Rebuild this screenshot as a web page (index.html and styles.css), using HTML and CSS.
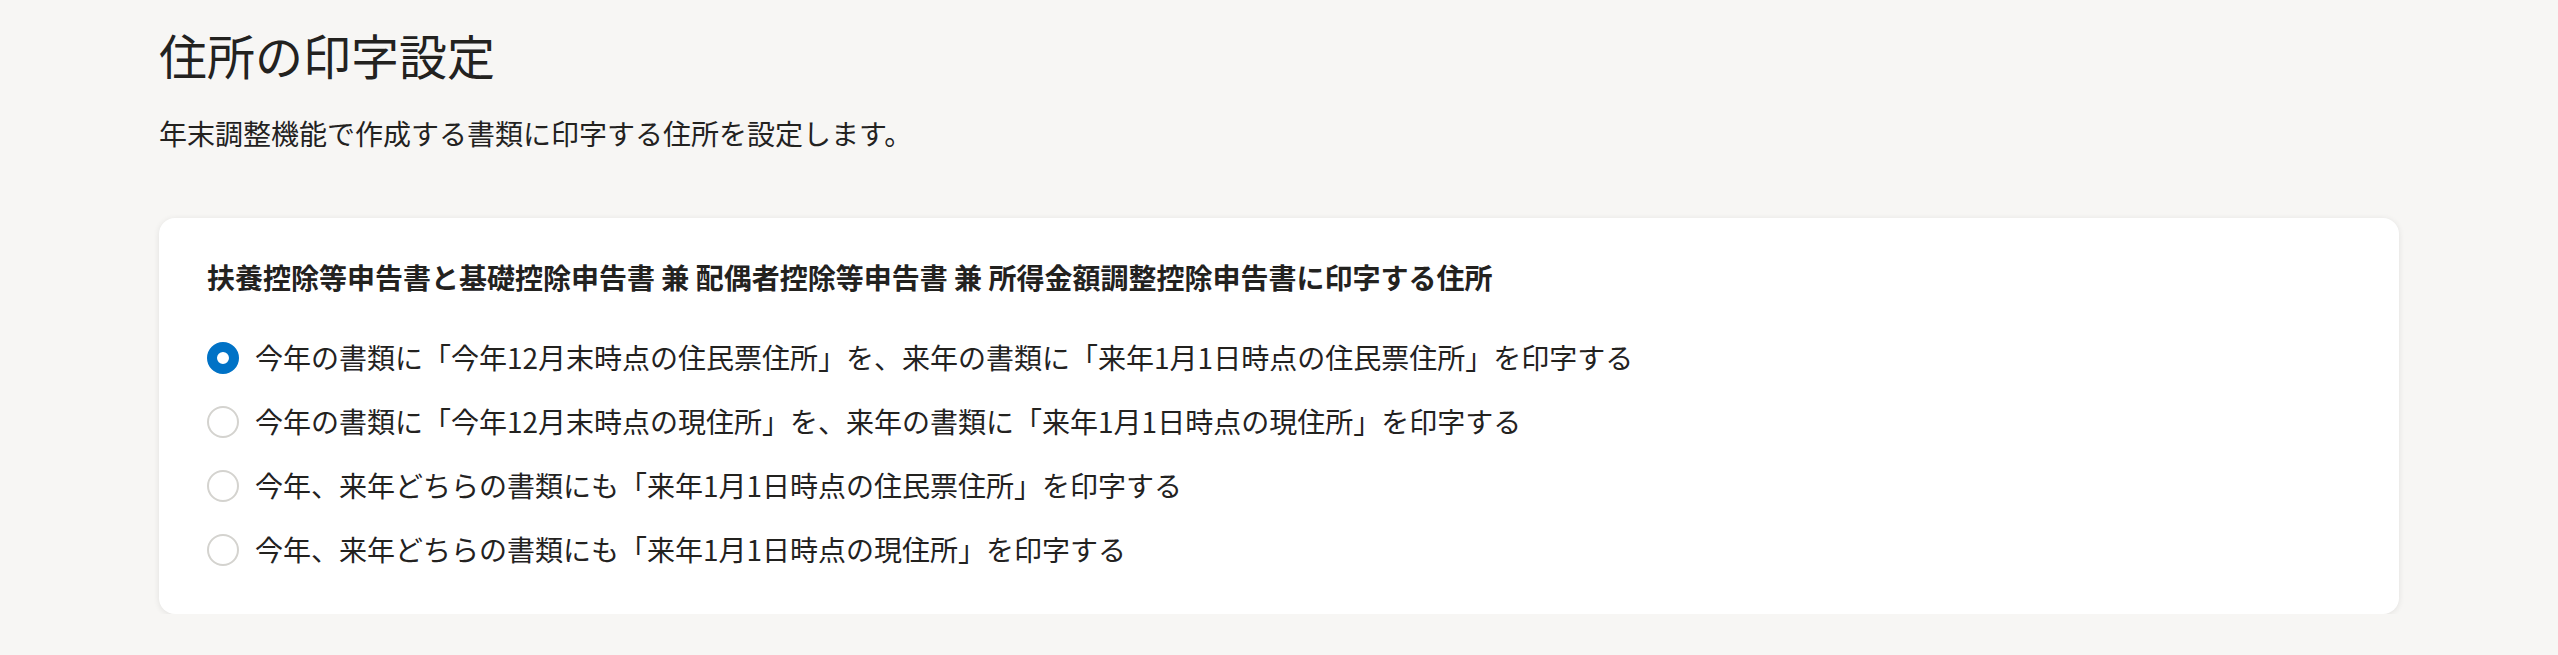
FILE: index.html
```html
<!DOCTYPE html>
<html lang="ja">
<head>
<meta charset="utf-8">
<title>住所の印字設定</title>
<link rel="stylesheet" href="styles.css">
</head>
<body>
<main class="page">
  <h1 class="page-title">住所の印字設定</h1>
  <p class="page-lead">年末調整機能で作成する書類に印字する住所を設定します。</p>
  <section class="card">
    <h2 class="card-title">扶養控除等申告書と基礎控除申告書 兼 配偶者控除等申告書 兼 所得金額調整控除申告書に印字する住所</h2>
    <div class="options">
      <label class="option">
        <input class="radio" type="radio" name="addr" checked>
        <span class="option-text">今年の書類に「今年12月末時点の住民票住所」を、来年の書類に「来年1月1日時点の住民票住所」を印字する</span>
      </label>
      <label class="option">
        <input class="radio" type="radio" name="addr">
        <span class="option-text">今年の書類に「今年12月末時点の現住所」を、来年の書類に「来年1月1日時点の現住所」を印字する</span>
      </label>
      <label class="option">
        <input class="radio" type="radio" name="addr">
        <span class="option-text">今年、来年どちらの書類にも「来年1月1日時点の住民票住所」を印字する</span>
      </label>
      <label class="option">
        <input class="radio" type="radio" name="addr">
        <span class="option-text">今年、来年どちらの書類にも「来年1月1日時点の現住所」を印字する</span>
      </label>
    </div>
  </section>
</main>
</body>
</html>
```
FILE: styles.css
```css
html, body {
  margin: 0;
  padding: 0;
}
body {
  background: #f7f6f4;
  color: #23221f;
  font-family: "Noto Sans CJK JP", "Noto Sans", sans-serif;
}
.page {
  width: 2240px;
  margin: 0 auto;
  padding-top: 18px;
}
.page-title {
  margin: 0;
  font-size: 48px;
  line-height: 72px;
  font-weight: 400;
  letter-spacing: 0;
}
.page-lead {
  margin: 22px 0 0;
  font-size: 28px;
  line-height: 42px;
}
.card {
  margin-top: 64px;
  background: #ffffff;
  border-radius: 16px;
  box-shadow: 0 1px 6px rgba(0, 0, 0, 0.09);
  padding: 38px 48px 44px;
}
.card-title {
  margin: 0;
  font-size: 28px;
  line-height: 42px;
  font-weight: 700;
}
.options {
  margin-top: 38px;
  display: flex;
  flex-direction: column;
  gap: 22px;
}
.option {
  display: flex;
  align-items: center;
  gap: 16px;
  height: 42px;
  font-size: 28px;
  line-height: 42px;
  cursor: pointer;
}
.radio {
  appearance: none;
  -webkit-appearance: none;
  margin: 0;
  width: 32px;
  height: 32px;
  box-sizing: border-box;
  border-radius: 50%;
  border: 2px solid #d4d3cf;
  background: #ffffff;
  flex: none;
  position: relative;
  top: 1px;
}
.radio:checked {
  border: 10px solid #0072c6;
}
.option-text {
  white-space: nowrap;
}
```
